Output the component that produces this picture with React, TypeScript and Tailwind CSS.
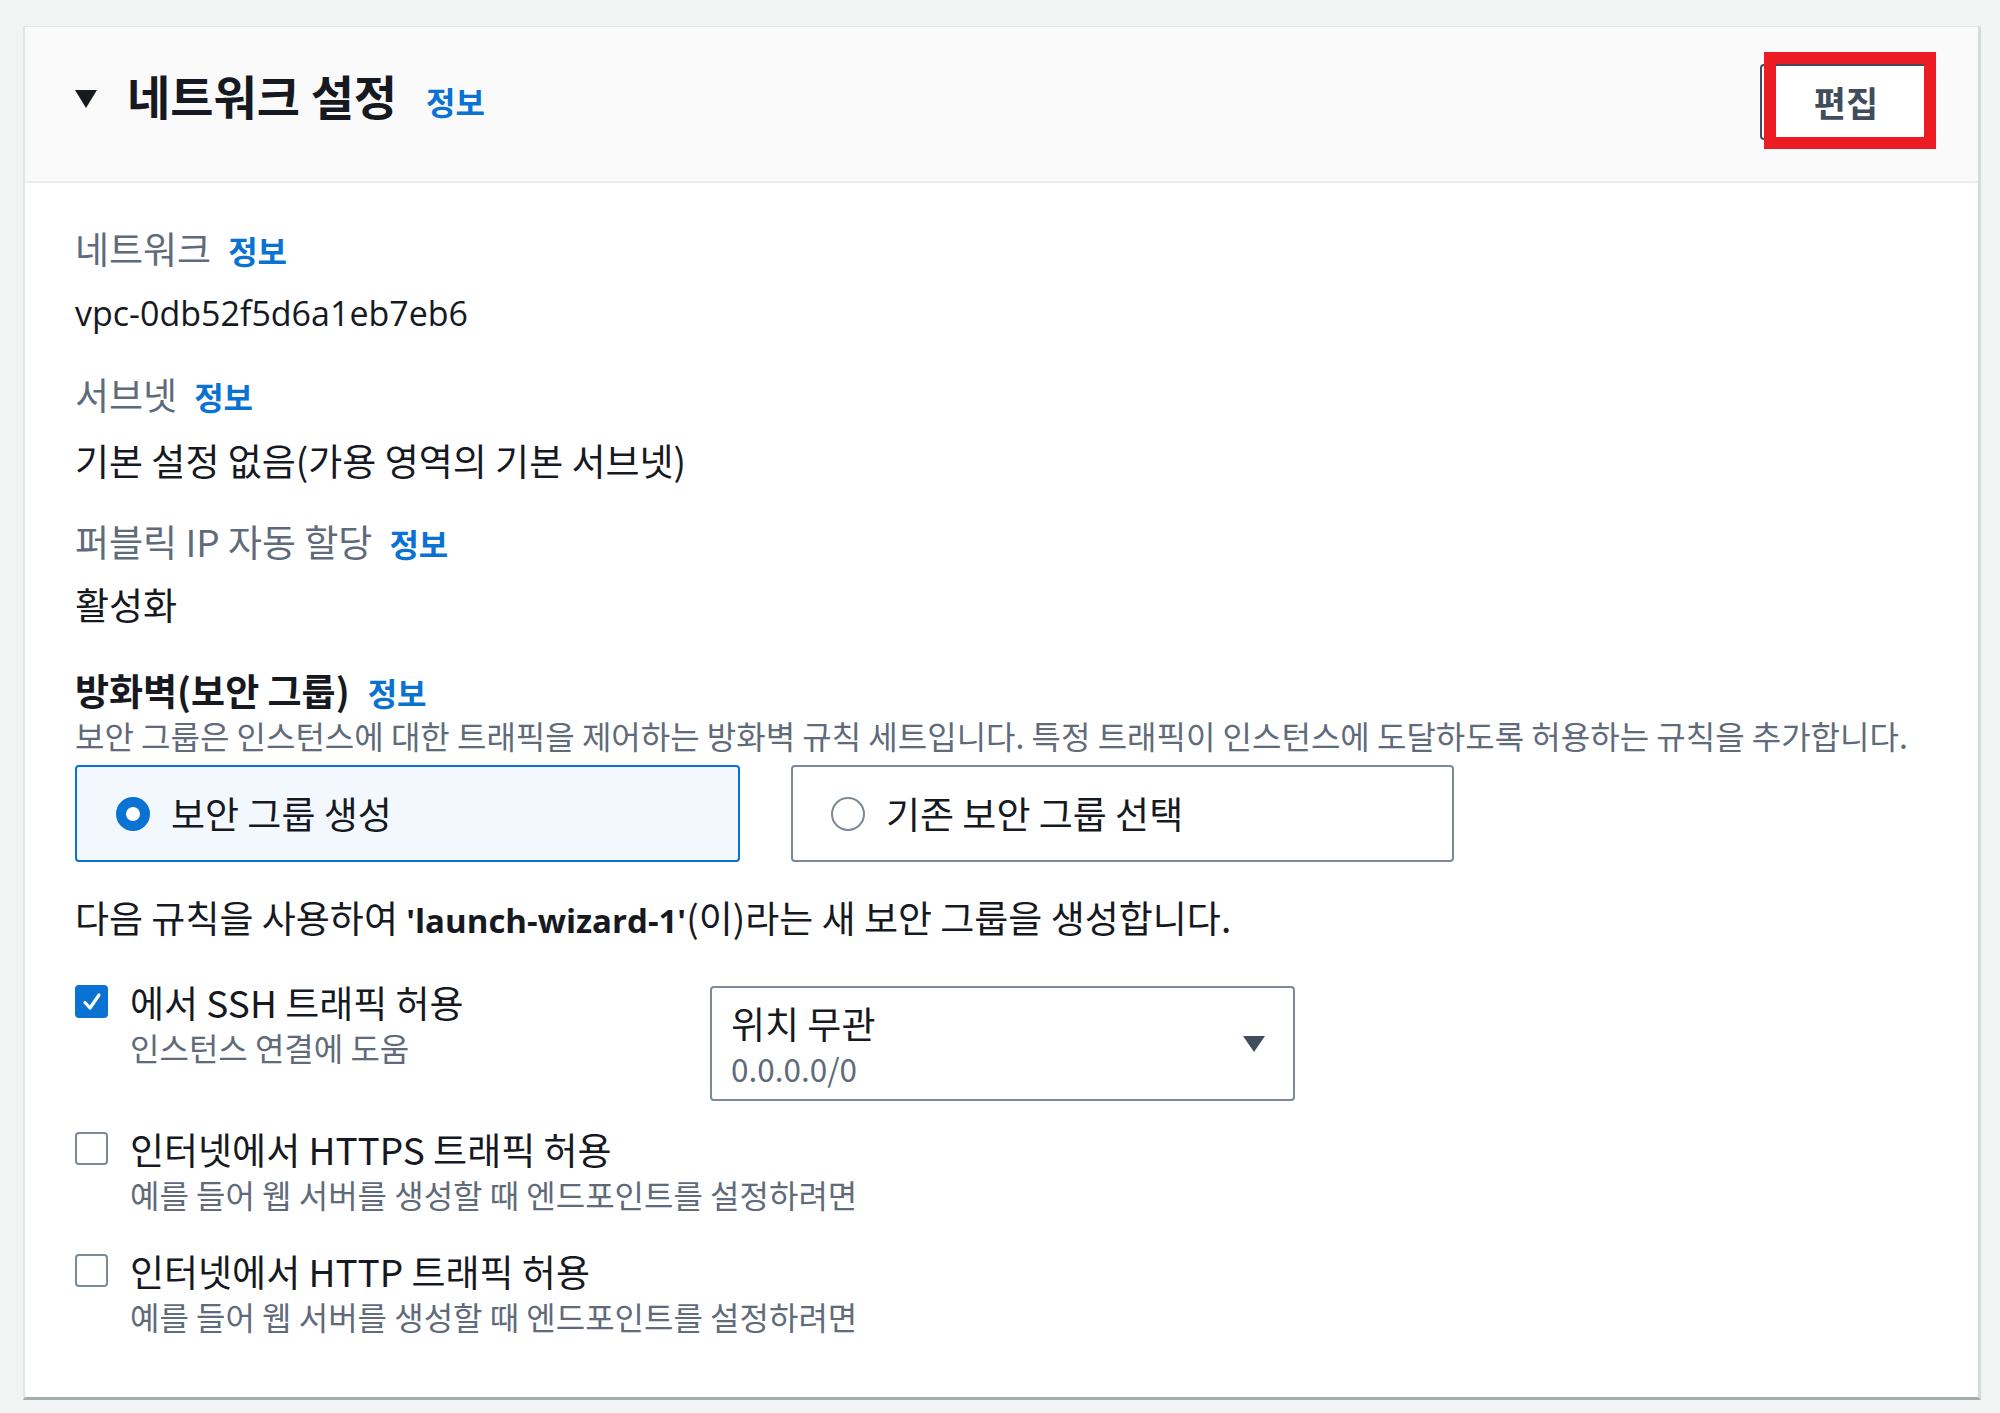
import React from 'react';

// small blue "정보" link used next to labels
const Info = ({ className = '' }: { className?: string }) => (
  <span className={`text-[32px] font-bold text-[#0972d3] ${className}`}>정보</span>
);

const Field = ({ label, value, top, gap, valueClass = 'text-[37px]' }: { label: string; value: string; top: string; gap: string; valueClass?: string }) => (
  <div className={top}>
    <div className="flex h-[44px] items-baseline text-[37px] leading-[44px] text-[#5f6b7a]">
      <span>{label}</span>
      <Info className="ml-[17px]" />
    </div>
    <div className={`${gap} ${valueClass} h-[44px] leading-[44px] text-[#16191f]`}>{value}</div>
  </div>
);

const Checkbox = ({ checked }: { checked?: boolean }) =>
  checked ? (
    <div className="mt-[5px] flex h-[33px] w-[33px] shrink-0 items-center justify-center rounded-[4px] bg-[#0972d3]">
      <svg width="22" height="22" viewBox="0 0 22 22">
        <path d="M4 11.5 L9 17 L18 4" fill="none" stroke="#fff" strokeWidth="3.2" strokeLinecap="round" strokeLinejoin="round" />
      </svg>
    </div>
  ) : (
    <div className="mt-[5px] h-[33px] w-[33px] shrink-0 rounded-[4px] border-[2.5px] border-[#7d8998] bg-white" />
  );

const RuleRow = ({ checked, label, desc, top, children }: { checked?: boolean; label: string; desc: string; top: string; children?: React.ReactNode }) => (
  <div className={`flex items-start ${top}`}>
    <div className="flex w-[635px] shrink-0 items-start">
      <Checkbox checked={checked} />
      <div className="ml-[22px] whitespace-nowrap">
        <div className="h-[44px] text-[37px] leading-[44px] text-[#16191f]">{label}</div>
        <div className="mt-[4px] h-[38px] text-[32px] leading-[38px] text-[#5f6b7a]">{desc}</div>
      </div>
    </div>
    {children}
  </div>
);

export default function App() {
  return (
    <div className="min-h-[1413px] overflow-hidden bg-[#f2f3f3] pt-[26px] font-['Noto_Sans_CJK_KR','Open_Sans',sans-serif]">
      <div className="ml-[23px] w-[1958px] border-l-2 border-t border-[#e3e6e6] border-r-[3px] border-r-[#d5dbdb] border-b-[3px] border-b-[#a4aeb0] bg-white">
        {/* header */}
        <div className="flex h-[156px] items-center justify-between border-b-2 border-[#eaeded] bg-[#fafafa] pl-[50px] pr-[46px] pb-[6px]">
          <div className="mb-[12px] flex items-center">
            <svg width="22" height="18" viewBox="0 0 22 18" className="mt-[8px]">
              <polygon points="0,0 22,0 11,18" fill="#16191f" />
            </svg>
            <div className="ml-[30px] flex h-[56px] items-baseline leading-[56px]">
              <h2 className="text-[47px] font-bold text-[#16191f]">네트워크 설정</h2>
              <Info className="ml-[29px]" />
            </div>
          </div>
          <div className="relative mt-[2px]">
            <button className="flex h-[76px] w-[172px] items-center justify-center rounded-[4px] border-2 border-[#414d5c] bg-white text-[35px] font-bold text-[#414d5c]">
              편집
            </button>
            {/* red annotation box */}
            <div className="pointer-events-none absolute -top-[12px] -bottom-[9px] left-[4px] -right-[4px] border-[12px] border-[#ec1c24]" />
          </div>
        </div>

        {/* body */}
        <div className="px-[50px] pt-[43px] pb-[62px]">
          <Field label="네트워크" value="vpc-0db52f5d6a1eb7eb6" top="" gap="mt-[21px]" valueClass="font-['Open_Sans',sans-serif] text-[34px]" />
          <Field label="서브넷" value="기본 설정 없음(가용 영역의 기본 서브넷)" top="mt-[37px]" gap="mt-[22px]" />
          <Field label="퍼블릭 IP 자동 할당" value="활성화" top="mt-[37px]" gap="mt-[19px]" />

          <div className="mt-[42px] flex h-[44px] items-baseline text-[37px] font-bold leading-[44px] text-[#16191f]">
            <span>방화벽(보안 그룹)</span>
            <Info className="ml-[18px]" />
          </div>
          <div className="mt-[4px] h-[38px] whitespace-nowrap text-[32px] leading-[38px] text-[#5f6b7a]">
            보안 그룹은 인스턴스에 대한 트래픽을 제어하는 방화벽 규칙 세트입니다. 특정 트래픽이 인스턴스에 도달하도록 허용하는 규칙을 추가합니다.
          </div>

          <div className="mt-[11px] flex gap-[51px]">
            <div className="flex h-[97px] w-[665px] items-center rounded-[4px] border-2 border-[#0972d3] bg-[#f2f8fd] pl-[39px]">
              <div className="h-[34px] w-[34px] rounded-full border-[10px] border-[#0972d3] bg-white" />
              <span className="ml-[21px] text-[37px] text-[#16191f]">보안 그룹 생성</span>
            </div>
            <div className="flex h-[97px] w-[663px] items-center rounded-[4px] border-2 border-[#7d8998] bg-white pl-[38px]">
              <div className="h-[34px] w-[34px] rounded-full border-[2.5px] border-[#7d8998] bg-white" />
              <span className="ml-[21px] text-[37px] text-[#16191f]">기존 보안 그룹 선택</span>
            </div>
          </div>

          <div className="mt-[33px] h-[44px] whitespace-nowrap text-[37px] leading-[44px] text-[#16191f]">
            다음 규칙을 사용하여 <span className="font-['Open_Sans',sans-serif] text-[33px] font-bold">'launch-wizard-1'</span>(이)라는 새 보안 그룹을 생성합니다.
          </div>

          <RuleRow checked label="에서 SSH 트래픽 허용" desc="인스턴스 연결에 도움" top="mt-[41px]">
            <div className="mt-[6px] flex h-[115px] w-[585px] items-center justify-between rounded-[4px] border-2 border-[#7d8998] bg-white pl-[19px] pr-[28px]">
              <div>
                <div className="h-[44px] text-[37px] leading-[44px] text-[#16191f]">위치 무관</div>
                <div className="mt-[4px] h-[38px] text-[31.5px] leading-[38px] text-[#5f6b7a]">0.0.0.0/0</div>
              </div>
              <svg width="22" height="16" viewBox="0 0 22 16">
                <polygon points="0,0 22,0 11,16" fill="#414d5c" />
              </svg>
            </div>
          </RuleRow>
          <RuleRow label="인터넷에서 HTTPS 트래픽 허용" desc="예를 들어 웹 서버를 생성할 때 엔드포인트를 설정하려면" top="mt-[26px]" />
          <RuleRow label="인터넷에서 HTTP 트래픽 허용" desc="예를 들어 웹 서버를 생성할 때 엔드포인트를 설정하려면" top="mt-[36px]" />
        </div>
      </div>
    </div>
  );
}
